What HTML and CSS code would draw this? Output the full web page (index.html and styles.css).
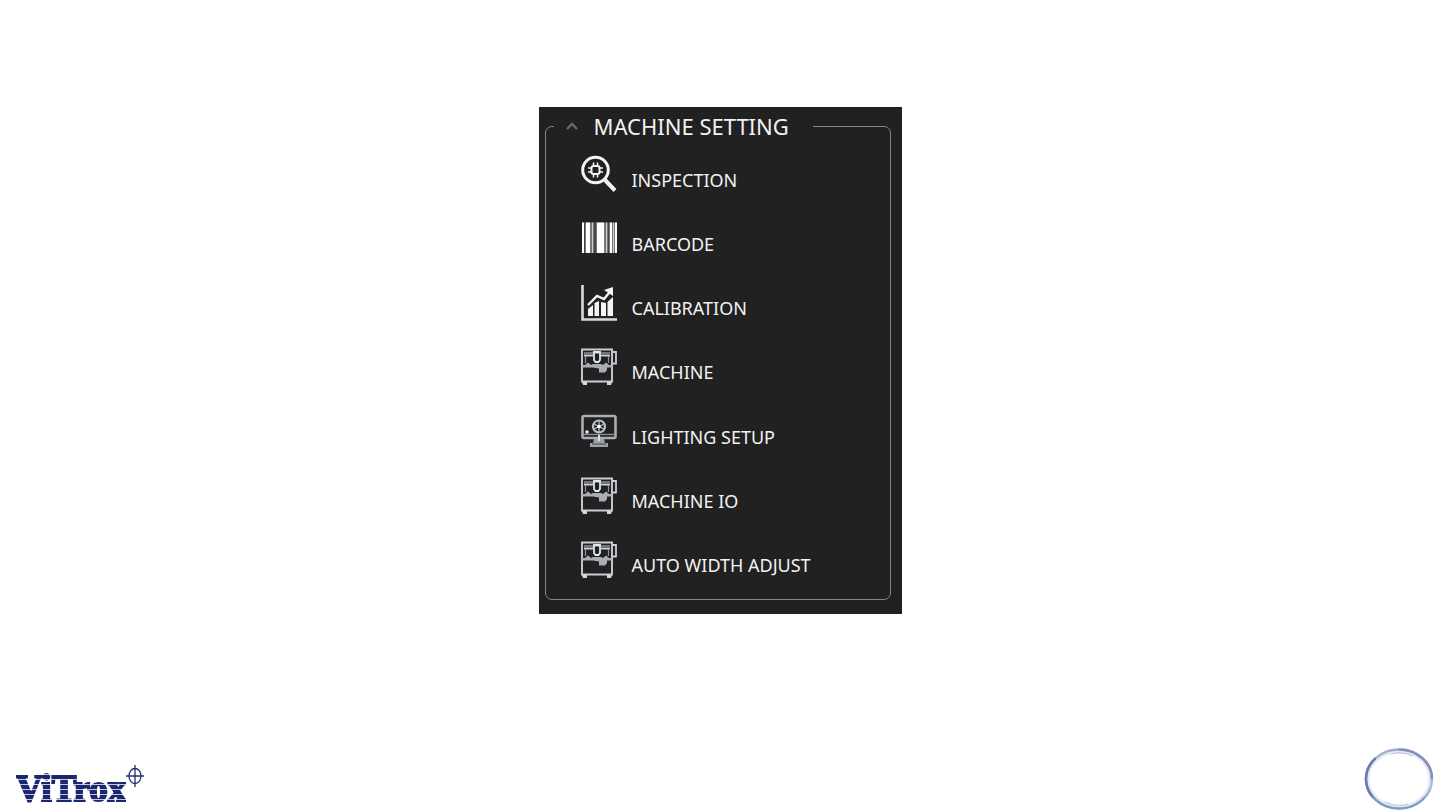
FILE: index.html
```html
<!DOCTYPE html>
<html lang="en">
<head>
<meta charset="utf-8">
<meta name="viewport" content="width=device-width, initial-scale=1">
<title>Machine Setting</title>
<link rel="stylesheet" href="styles.css">
</head>
<body>
<svg class="symbols" aria-hidden="true">
  <symbol id="machine" viewBox="0 0 36 38">
    <g fill="none" stroke="#c9cdd4" stroke-width="1.6">
      <path d="M1 1.500H31V33.500H1Z" stroke-width="1.900"/>
      <path d="M3 5H29" stroke="#8d939c" stroke-width="1.500"/>
      <path d="M3 7.500H12M20 7.500H29" stroke-width="1.800"/>
      <path d="M31 4H35V15.500H31" stroke-width="1.800"/>
      <path d="M13 4V12L14.500 14H17.500L19 12V4Z" stroke-width="1.800" stroke="#e4e7eb"/>
      <path d="M4.500 8V15M27.500 8V15" stroke-width="1.200" stroke="#8d939c"/>
    </g>
    <path d="M1 17L4 17L7 14.500L10 17L12 16H20L22 17L25 14.500L28 17H31V19.500H26V22L24 24.500H18V20.500L12 19.500H1Z" fill="#a9aeb6"/>
    <path d="M1 34H6V37H2ZM26 34H31L30 37H26Z" fill="#d4d7dc"/>
  </symbol>
</svg>

<main class="stage">
  <section class="panel">
    <fieldset class="group">
      <legend class="group-legend">
        <button class="group-toggle" type="button" aria-expanded="true">
          <svg class="chevron" viewBox="0 0 12 8" aria-hidden="true"><path d="M1 7L6 2L11 7" fill="none" stroke="#686868" stroke-width="2.4"/></svg>
          <span>MACHINE SETTING</span>
        </button>
      </legend>
      <ul class="menu">
        <li><button class="item" type="button">
          <svg class="icon" viewBox="0 0 36 38" aria-hidden="true">
            <g fill="none" stroke="#f4f4f4">
              <circle cx="14.500" cy="15" r="12.800" stroke-width="3"/>
              <path d="M24 25L34 35.500" stroke-width="4"/>
              <rect x="10.500" y="11" width="8" height="8" rx="2" stroke-width="2"/>
              <path d="M12.500 7.500V11M16.500 7.500V11M12.500 19V22.500M16.500 19V22.500M7 13H10.500M7 17H10.500M18.500 13H22M18.500 17H22" stroke-width="1.500"/>
            </g>
          </svg><span class="label">INSPECTION</span></button></li>
        <li><button class="item" type="button">
          <svg class="icon" viewBox="0 0 36 38" aria-hidden="true">
            <path d="M1 3.500H36V34H1Z" fill="#777"/>
            <path d="M1 3.500H3V34H1ZM5 3.500H9V34H5ZM16 3.500H23V34H16ZM29 3.500H31V34H29ZM34 3.500H36V34H34Z" fill="#fff"/>
            <path d="M11 3.500H12V34H11ZM25 3.500H26V34H25ZM32 3.500H33V34H32Z" fill="#ccc"/>
            <path d="M13 3.500H15V34H13ZM3 3.500H4V34H3ZM27 3.500H28V34H27Z" fill="#444"/>
          </svg><span class="label">BARCODE</span></button></li>
        <li><button class="item" type="button">
          <svg class="icon" viewBox="0 0 36 38" aria-hidden="true">
            <path d="M1.500 1V35.500H36" fill="none" stroke="#dcdcdc" stroke-width="2.600"/>
            <path d="M7 25L12 21V32H7ZM13.500 19L18 17V32H13.500ZM20 18L25 19V32H20ZM26.500 18L32 13V32H26.500Z" fill="#f4f4f4"/>
            <path d="M7 21L16 12L23 15L30 6.500" fill="none" stroke="#f4f4f4" stroke-width="2.400"/>
            <path d="M23 6L32 3V12Z" fill="#f4f4f4"/>
          </svg><span class="label">CALIBRATION</span></button></li>
        <li><button class="item" type="button"><svg class="icon" aria-hidden="true"><use href="#machine"/></svg><span class="label">MACHINE</span></button></li>
        <li><button class="item" type="button">
          <svg class="icon" viewBox="0 0 36 38" aria-hidden="true">
            <rect x="1.500" y="4" width="33" height="22" rx="1.500" fill="none" stroke="#a9adb5" stroke-width="2.600"/>
            <path d="M3 22.500H33" stroke="#8d929b" stroke-width="1.300"/>
            <circle cx="18" cy="14.500" r="6" fill="none" stroke="#b9bdc4" stroke-width="2.200"/>
            <path d="M18 9V20M13 12L23 17M23 12L13 17" stroke="#b9bdc4" stroke-width="1.300"/>
            <circle cx="18" cy="14.500" r="1.800" fill="#fff"/>
            <circle cx="6" cy="20" r="1.800" fill="#e8e8e8"/>
            <path d="M13 27H23L24 31H27V35H9V31H12Z" fill="#9da2aa"/>
            <path d="M17 23H19V29H17Z" fill="#e0e0e0"/>
            <path d="M11 32H25" stroke="#444" stroke-width="1"/>
          </svg><span class="label">LIGHTING SETUP</span></button></li>
        <li><button class="item" type="button"><svg class="icon" aria-hidden="true"><use href="#machine"/></svg><span class="label">MACHINE IO</span></button></li>
        <li><button class="item" type="button"><svg class="icon" aria-hidden="true"><use href="#machine"/></svg><span class="label">AUTO WIDTH ADJUST</span></button></li>
      </ul>
    </fieldset>
  </section>
</main>

<footer class="footer">
  <div class="logo">
    <span class="logo-text">ViTrox</span>
    <svg class="logo-mark" viewBox="0 0 18 22" aria-hidden="true"><g fill="none" stroke="#26306f" stroke-width="1.300"><ellipse cx="9" cy="11" rx="6" ry="7.500"/><path d="M9 0V22M0 11H18"/></g></svg>
  </div>
  <svg class="ring" viewBox="0 0 70 63" aria-hidden="true">
    <defs>
      <linearGradient id="rim" x1="0" y1="0" x2="1" y2="1">
        <stop offset="0" stop-color="#b5bedc"/><stop offset=".5" stop-color="#8792bd"/><stop offset=".8" stop-color="#a3c4dc"/><stop offset="1" stop-color="#7783b2"/>
      </linearGradient>
    </defs>
    <g fill="none">
      <ellipse cx="35" cy="32" rx="31" ry="27.500" stroke="#e6eaf6" stroke-width="3"/>
      <ellipse cx="35" cy="32" rx="33" ry="29.500" stroke="url(#rim)" stroke-width="2.500"/>
      <path d="M11.700 11.100A33 29.500 0 0 0 9 50.200" stroke="#6e79ab" stroke-width="2.500"/>
      <path d="M35 2.500A33 29.500 0 0 1 68 32" stroke="#8790bd" stroke-width="2.500"/>
      <path d="M9 50.200A33 29.500 0 0 0 61 50.200" stroke="#7c9fbe" stroke-width="2"/>
      <path d="M27 7C35 5 43 6 49 9M21 55C29 59 38 59 44 57" stroke="#c0c7df" stroke-width="1.200"/>
    </g>
  </svg>
</footer>
</body>
</html>
```
FILE: styles.css
```css
* { box-sizing: border-box; }

body {
  display: flex;
  flex-direction: column;
  min-height: 100vh;
  margin: 0;
  background: #fff;
  font-family: "Noto Sans", "Open Sans", sans-serif;
}

button {
  border: 0;
  padding: 0;
  background: none;
  color: inherit;
  font: inherit;
  cursor: pointer;
}

.symbols { display: none; }

.stage {
  display: flex;
  flex: 1;
  align-items: flex-start;
  justify-content: center;
  padding-top: 107px;
}

.panel {
  width: 100%;
  max-width: 363px;
  padding: 4px 11px 14px 6px;
  background: #212121;
  color: #f2f2f2;
}

.group {
  min-width: 0;
  margin: 0;
  padding: 0;
  border: 1px solid #858585;
  border-radius: 7px;
}

.group-legend {
  margin-left: 8px;
  padding: 0 24px 0 12px;
  font-size: 22px;
  line-height: 30px;
}

.group-toggle {
  display: flex;
  align-items: center;
  gap: 16px;
}

.chevron {
  width: 12px;
  height: 8px;
}

.menu {
  display: grid;
  grid-auto-rows: 1fr;
  min-height: 458px;
  margin: 0;
  padding: 1px 0 7px;
  list-style: none;
}

.item {
  display: flex;
  align-items: center;
  gap: 15px;
  width: 100%;
  height: 100%;
  padding-left: 35px;
  text-align: left;
}

.icon {
  flex: none;
  width: 36px;
  height: 38px;
}

.label {
  padding-top: 11px;
  font-size: 18px;
  line-height: 24px;
}

.footer {
  display: flex;
  align-items: flex-end;
  justify-content: space-between;
  padding: 0 6px 0 16px;
}

.logo {
  display: flex;
  align-items: flex-start;
  padding-bottom: 3px;
}

.logo-text {
  padding-top: 6px;
  background: repeating-linear-gradient(#1b2670 0 4px, #c3c8de 4px 5px);
  background-clip: text;
  color: transparent;
  font-family: "Liberation Serif", serif;
  font-size: 37px;
  font-weight: bold;
  line-height: 36px;
  -webkit-text-stroke: 2px transparent;
}

.logo-mark {
  width: 18px;
  height: 22px;
}

.ring {
  width: 70px;
  height: 63px;
}
```
